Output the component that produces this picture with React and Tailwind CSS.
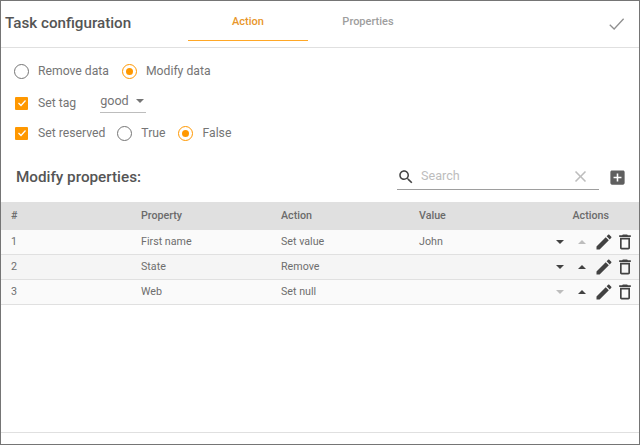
const PENCIL = "M3 17.25V21h3.75L17.81 9.94l-3.75-3.75L3 17.25zM20.71 7.04c.39-.39.39-1.02 0-1.41l-2.34-2.34c-.39-.39-1.02-.39-1.41 0l-1.83 1.83 3.75 3.75 1.83-1.83z";
const TRASH = "M6 19c0 1.1.9 2 2 2h8c1.1 0 2-.9 2-2V7H6v12zM8 9h8v10H8V9zm7.5-5l-1-1h-5l-1 1H5v2h14V4z";
const SEARCH = "M15.5 14h-.79l-.28-.27C15.41 12.59 16 11.11 16 9.5 16 5.91 13.09 3 9.5 3S3 5.91 3 9.5 5.91 16 9.5 16c1.61 0 3.09-.59 4.23-1.57l.27.28v.79l5 4.99L20.49 19l-4.99-5zm-6 0C7.01 14 5 11.99 5 9.5S7.01 5 9.5 5 14 7.01 14 9.5 11.99 14 9.5 14z";
const CLOSE = "M19 6.41L17.59 5 12 10.59 6.41 5 5 6.41 10.59 12 5 17.59 6.41 19 12 13.41 17.59 19 19 17.59 13.41 12z";
const ADD = "M19 3H5c-1.1 0-2 .9-2 2v14c0 1.1.9 2 2 2h14c1.1 0 2-.9 2-2V5c0-1.1-.9-2-2-2zm-2 10h-4v4h-2v-4H7v-2h4V7h2v4h4v2z";

function Icon({ d, className }) {
    return (
        <svg viewBox="0 0 24 24" className={className} fill="currentColor">
            <path d={d} />
        </svg>
    );
}

function Radio({ checked, label, className = "" }) {
    return (
        <div className={"flex items-center gap-[9px] " + className}>
            {checked ? (
                <span className="flex w-[15px] h-[15px] rounded-full border-[1.5px] border-[#ff9800] items-center justify-center">
                    <span className="w-[7px] h-[7px] rounded-full bg-[#ff9800]" />
                </span>
            ) : (
                <span className="w-[15px] h-[15px] rounded-full border-[1.5px] border-[#757575]" />
            )}
            <span>{label}</span>
        </div>
    );
}

function Checkbox({ label }) {
    return (
        <div className="flex items-center gap-[10px] ml-[1px]">
            <span className="flex w-[13px] h-[13px] rounded-[1px] bg-[#ff9800] items-center justify-center text-white">
                <svg viewBox="0 0 24 24" className="w-[12px] h-[12px]" fill="none" stroke="currentColor" strokeWidth="2.5">
                    <path d="M5 12l5 5 9-10" />
                </svg>
            </span>
            <span>{label}</span>
        </div>
    );
}

function Caret({ up, faded }) {
    const color = faded ? "border-[#bdbdbd]" : "border-[#424242]";
    if (up) return <span className={"w-0 h-0 border-x-[4px] border-x-transparent border-b-[4px] " + color} />;
    return <span className={"w-0 h-0 border-x-[4px] border-x-transparent border-t-[4px] " + color} />;
}

const rows = [
    { n: 1, prop: "First name", action: "Set value", value: "John", bg: "bg-[#fafafa]", downFaded: false, upFaded: true },
    { n: 2, prop: "State", action: "Remove", value: "", bg: "bg-[#f5f5f5]", downFaded: false, upFaded: false },
    { n: 3, prop: "Web", action: "Set null", value: "", bg: "bg-[#fafafa]", downFaded: true, upFaded: false },
];

export default function App() {
    return (
        <div className="w-[640px] h-[445px] flex flex-col bg-white border border-[#757575] font-['Roboto',sans-serif] text-[#616161] overflow-hidden">
            <header className="flex h-[47px] shrink-0 border-b border-[#e0e0e0]">
                <h1 className="w-[187px] pl-[4px] pt-[10px] text-[15.2px] leading-[24px] font-medium text-[#555555]">Task configuration</h1>
                <div className="w-[120px] h-[40px] border-b border-[#ffa726] text-center pt-[13px] text-[11px] leading-[16px] font-medium text-[#e8962a]">Action</div>
                <div className="w-[120px] h-[40px] text-center pt-[13px] text-[11px] leading-[16px] font-medium text-[#9e9e9e]">Properties</div>
                <div className="flex-1 flex justify-end pt-[13px] pr-[13px]">
                    <svg viewBox="0 0 24 24" className="w-[19px] h-[19px] text-[#8f8f8f]" fill="none" stroke="currentColor" strokeWidth="1.6">
                        <path d="M3.5 13.5L9 19 21 6" />
                    </svg>
                </div>
            </header>
            <section className="pl-[13px] text-[12.2px] leading-[16px] text-[#757575]">
                <div className="flex h-[16px] mt-[15px] items-center">
                    <Radio label="Remove data" />
                    <Radio checked label="Modify data" className="ml-[13px]" />
                </div>
                <div className="flex h-[22px] mt-[12px] items-start">
                    <div className="mt-[4px]"><Checkbox label="Set tag" /></div>
                    <div className="ml-[24px] w-[46px] h-[22px] border-b border-[#bdbdbd] flex items-start gap-[7px] pt-[2px] text-[12.6px] leading-[15px]">
                        <span>good</span>
                        <span className="mt-[6px] w-0 h-0 border-x-[4px] border-x-transparent border-t-[4px] border-[#757575]" />
                    </div>
                </div>
                <div className="flex h-[16px] mt-[12px] items-center">
                    <Checkbox label="Set reserved" />
                    <Radio label="True" className="ml-[12px]" />
                    <Radio checked label="False" className="ml-[13px]" />
                </div>
            </section>
            <section className="flex h-[44px] mt-[17px] shrink-0">
                <h2 className="pl-[15px] pt-[8px] text-[15.25px] leading-[22px] font-medium text-[#555555]">Modify properties:</h2>
                <div className="ml-auto mt-[6px] w-[202px] h-[26px] flex items-center border-b border-[#9e9e9e]">
                    <Icon d={SEARCH} className="w-[18px] h-[18px] text-[#444444]" />
                    <span className="ml-[6px] text-[12.6px] text-[#bdbdbd]">Search</span>
                    <Icon d={CLOSE} className="w-[19px] h-[19px] ml-auto mr-[9px] text-[#bdbdbd]" />
                </div>
                <div className="w-[40px] pl-[9px] pt-[10px]">
                    <Icon d={ADD} className="w-[19px] h-[19px] text-[#5f5f5f]" />
                </div>
            </section>
            <div className="grid grid-cols-[130px_140px_138px_1fr] h-[28px] shrink-0 items-center pl-[10px] bg-[#e0e0e0] text-[10.7px] font-medium text-[#6b6b6b]">
                <span>#</span>
                <span>Property</span>
                <span>Action</span>
                <div className="flex justify-between pr-[30px]">
                    <span>Value</span>
                    <span>Actions</span>
                </div>
            </div>
            {rows.map((r) => (
                <div key={r.n} className={"grid grid-cols-[130px_140px_138px_1fr] h-[25px] shrink-0 items-center pl-[10px] border-b border-[#e0e0e0] text-[10.7px] text-[#6e6e6e] " + r.bg}>
                    <span>{r.n}</span>
                    <span>{r.prop}</span>
                    <span>{r.action}</span>
                    <div className="flex items-center">
                        <span>{r.value}</span>
                        <div className="ml-auto flex items-center pr-[4px]">
                            <Caret faded={r.downFaded} />
                            <span className="w-[14px]" />
                            <Caret up faded={r.upFaded} />
                            <Icon d={PENCIL} className="ml-[8px] w-[20px] h-[20px] text-[#424242]" />
                            <Icon d={TRASH} className="ml-[1px] w-[20px] h-[20px] text-[#424242]" />
                        </div>
                    </div>
                </div>
            ))}
            <div className="flex-1" />
            <footer className="h-[12px] shrink-0 border-t border-[#e0e0e0]" />
        </div>
    );
}
